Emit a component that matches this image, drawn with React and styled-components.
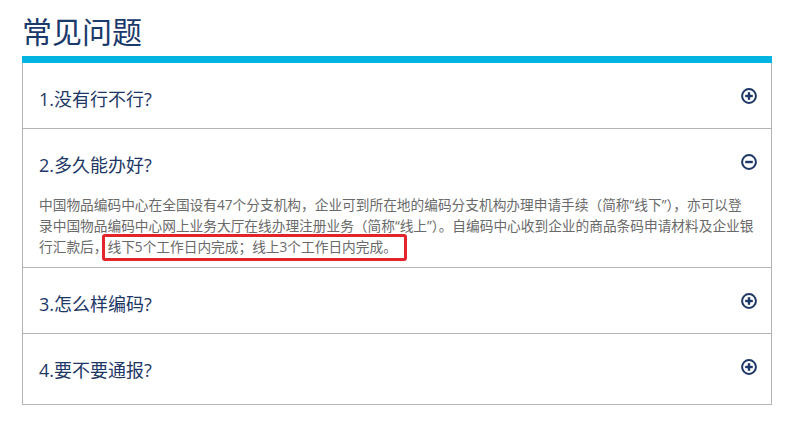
import React, { useState } from "react";
import styled, { createGlobalStyle } from "styled-components";

const GlobalStyle = createGlobalStyle`
  html, body {
    margin: 0;
    padding: 0;
    background: #ffffff;
  }
  body {
    font-family: "Open Sans", "Noto Sans CJK SC", sans-serif;
  }
  * { box-sizing: border-box; }
`;

const Page = styled.div`
  width: 787px;
  padding: 10px 15px 0 22px;
`;

const Title = styled.h2`
  margin: 0 0 6px 0;
  font-family: "Noto Sans CJK SC", sans-serif;
  font-size: 30px;
  line-height: 40px;
  font-weight: 400;
  color: #1b3a6c;
`;

const Bar = styled.div`
  height: 7px;
  background: #00b4e1;
`;

const List = styled.div`
  border: 1px solid #b3b3b3;
  border-top: none;
`;

const Item = styled.div`
  padding: 24px 14px ${(p) => (p.$open ? "10px" : p.$last ? "22px" : "17px")} 16px;
  border-bottom: ${(p) => (p.$last ? "none" : "1px solid #b3b3b3")};
`;

const Head = styled.div`
  display: flex;
  align-items: center;
  justify-content: space-between;
  cursor: pointer;
`;

const Question = styled.div`
  font-size: 18px;
  line-height: 24px;
  color: #1d3766;
`;

const Toggle = styled.svg`
  width: 16px;
  height: 16px;
  flex: none;
  margin-top: -6px;
`;

const Answer = styled.p`
  margin: 17px 0 0 0;
  font-size: 13.7px;
  line-height: 21px;
  color: #6a6a6a;
`;

const Highlight = styled.span`
  position: relative;
  &::after {
    content: "";
    position: absolute;
    left: -5px;
    right: -10px;
    top: -3px;
    bottom: -5px;
    border: 3px solid #e3242b;
    border-radius: 3px;
    pointer-events: none;
  }
`;

function Icon({ open }) {
  return (
    <Toggle viewBox="0 0 16 16" aria-hidden="true">
      <circle cx="8" cy="8" r="6.9" fill="none" stroke="#1d3766" strokeWidth="2" />
      <line x1="4.2" y1="8" x2="11.8" y2="8" stroke="#1d3766" strokeWidth="2.4" />
      {!open && (
        <line x1="8" y1="4.2" x2="8" y2="11.8" stroke="#1d3766" strokeWidth="2.4" />
      )}
    </Toggle>
  );
}

const faqs = [
  { q: "1.没有行不行?" },
  { q: "2.多久能办好?", a: true },
  { q: "3.怎么样编码?" },
  { q: "4.要不要通报?" },
];

export default function App() {
  const [open, setOpen] = useState(1);
  return (
    <>
      <GlobalStyle />
      <Page>
        <Title>常见问题</Title>
        <Bar />
        <List>
          {faqs.map((f, i) => {
            const isOpen = open === i;
            return (
              <Item key={i} $open={isOpen} $last={i === faqs.length - 1}>
                <Head onClick={() => setOpen(isOpen ? -1 : i)}>
                  <Question>{f.q}</Question>
                  <Icon open={isOpen} />
                </Head>
                {isOpen && f.a && (
                  <Answer>
                    中国物品编码中心在全国设有47个分支机构，企业可到所在地的编码分支机构办理申请手续（简称“线下”），亦可以登
                    <br />
                    录中国物品编码中心网上业务大厅在线办理注册业务（简称“线上”）。自编码中心收到企业的商品条码申请材料及企业银
                    <br />
                    行汇款后，<Highlight>线下5个工作日内完成；线上3个工作日内完成。</Highlight>
                  </Answer>
                )}
              </Item>
            );
          })}
        </List>
      </Page>
    </>
  );
}
